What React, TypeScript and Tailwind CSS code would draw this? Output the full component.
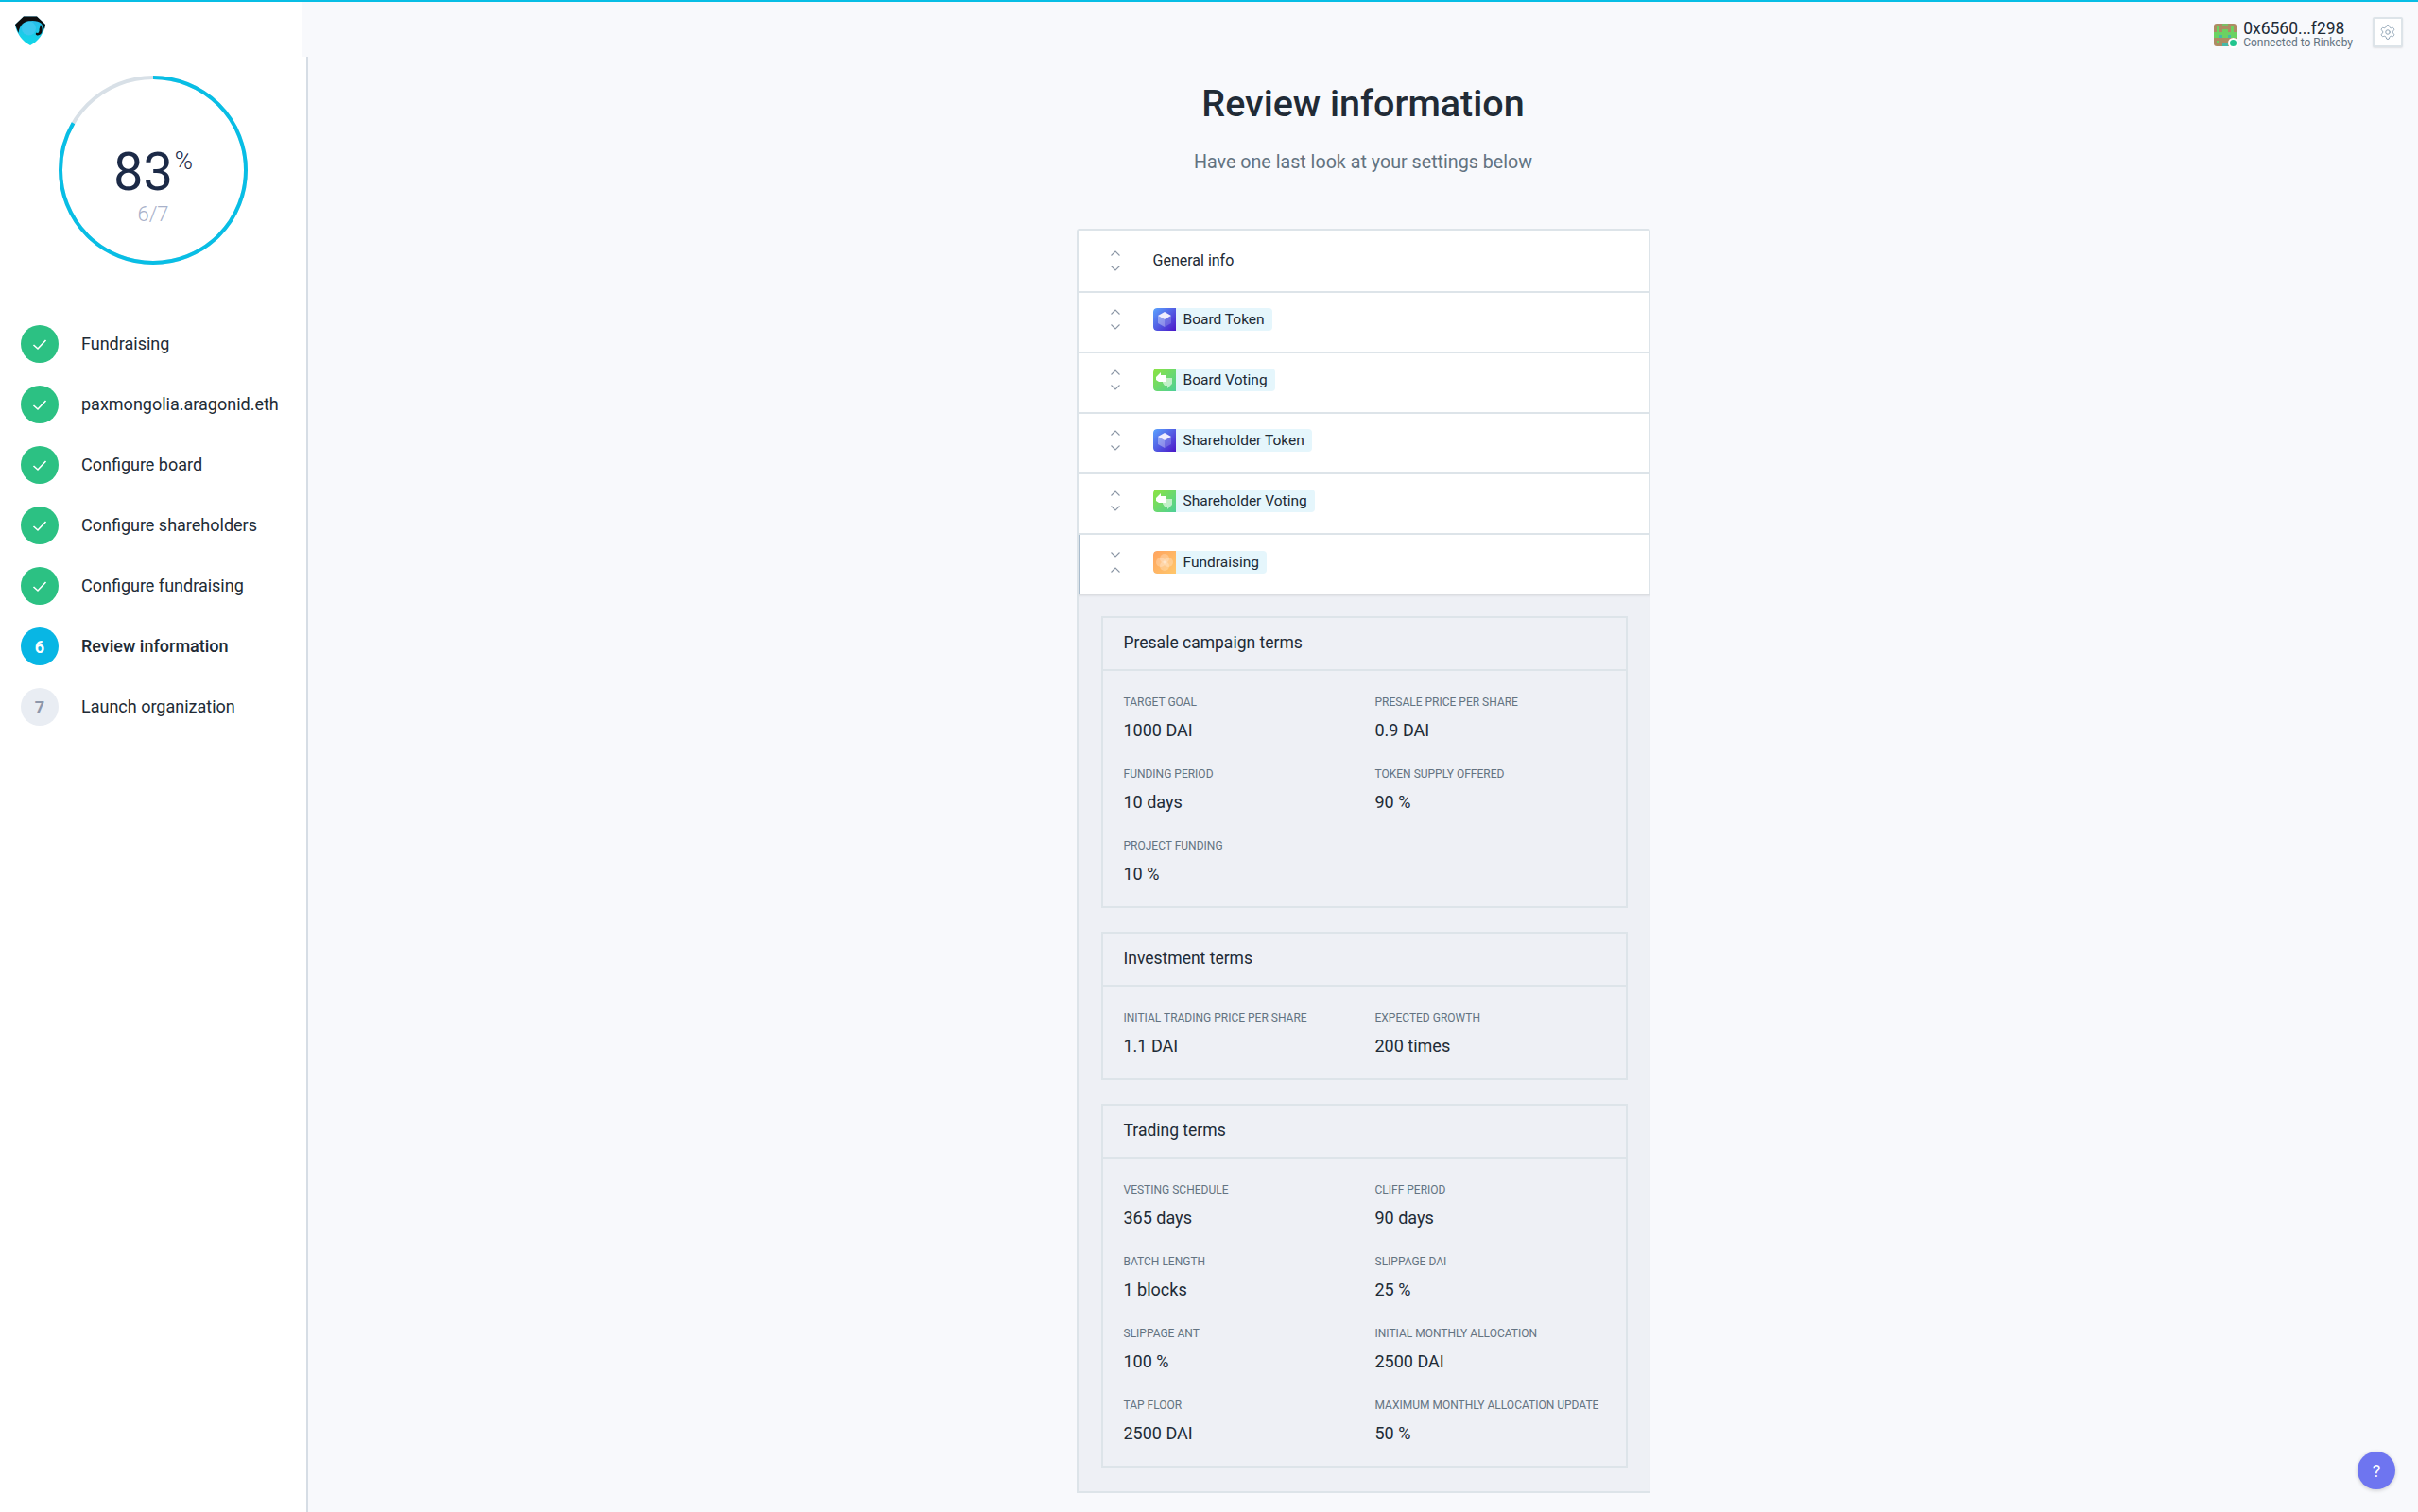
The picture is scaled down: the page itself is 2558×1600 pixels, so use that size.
import { Settings } from 'lucide-react';

const steps = [
  { label: 'Fundraising', state: 'done' },
  { label: 'paxmongolia.aragonid.eth', state: 'done' },
  { label: 'Configure board', state: 'done' },
  { label: 'Configure shareholders', state: 'done' },
  { label: 'Configure fundraising', state: 'done' },
  { label: 'Review information', state: 'active', num: '6' },
  { label: 'Launch organization', state: 'todo', num: '7' },
];

const rows = [
  { label: 'Board Token', icon: 'token' },
  { label: 'Board Voting', icon: 'voting' },
  { label: 'Shareholder Token', icon: 'token' },
  { label: 'Shareholder Voting', icon: 'voting' },
];

const sections = [
  {
    title: 'Presale campaign terms',
    items: [
      ['TARGET GOAL', '1000 DAI'],
      ['PRESALE PRICE PER SHARE', '0.9 DAI'],
      ['FUNDING PERIOD', '10 days'],
      ['TOKEN SUPPLY OFFERED', '90 %'],
      ['PROJECT FUNDING', '10 %'],
    ],
  },
  {
    title: 'Investment terms',
    items: [
      ['INITIAL TRADING PRICE PER SHARE', '1.1 DAI'],
      ['EXPECTED GROWTH', '200 times'],
    ],
  },
  {
    title: 'Trading terms',
    items: [
      ['VESTING SCHEDULE', '365 days'],
      ['CLIFF PERIOD', '90 days'],
      ['BATCH LENGTH', '1 blocks'],
      ['SLIPPAGE DAI', '25 %'],
      ['SLIPPAGE ANT', '100 %'],
      ['INITIAL MONTHLY ALLOCATION', '2500 DAI'],
      ['TAP FLOOR', '2500 DAI'],
      ['MAXIMUM MONTHLY ALLOCATION UPDATE', '50 %'],
    ],
  },
];

function Logo() {
  return (
    <svg width="32" height="31" viewBox="0 0 32 31">
      <defs>
        <linearGradient id="lg" x1="0" y1="0" x2="0" y2="1">
          <stop offset="0" stopColor="#2cb8ea" />
          <stop offset="1" stopColor="#0fd8e8" />
        </linearGradient>
      </defs>
      <path d="M9 0.5 H23 L32 9 C31 18 24 27 16 31 C8 27 1 18 0 9 Z" fill="url(#lg)" />
      <path d="M9 0.5 H23 L32 9 L31 14 L28 8 C24 4 13 4 8 8 C5 11 4 14 3.5 18 L0 9 Z" fill="#0e0e0e" />
      <circle cx="14.5" cy="13" r="7.5" fill="#3cc8ef" />
      <path d="M27 9 C30 14 29 20 24 20.5 C21.5 20.5 21 18 23 17.5 C24 19 26 17 25.5 14 Z" fill="#0e0e0e" />
    </svg>
  );
}

function Progress() {
  const r = 98;
  const c = 2 * Math.PI * r;
  return (
    <div className="relative w-[200px] h-[200px] ml-[62px]">
      <svg width="200" height="200" viewBox="0 0 200 200" className="-rotate-90">
        <circle cx="100" cy="100" r={r} fill="none" stroke="#d8e0e7" strokeWidth="4" />
        <circle
          cx="100"
          cy="100"
          r={r}
          fill="none"
          stroke="#08bee5"
          strokeWidth="4"
          strokeDasharray={`${c * 0.8333} ${c}`}
        />
      </svg>
      <div className="absolute inset-0 flex flex-col items-center pt-[72px]">
        <div className="flex items-start">
          <span className="text-[56px] leading-[60px] text-[#1c2a47]">83</span>
          <span className="text-[26px] leading-[36px] font-light text-[#1c2a47] ml-[2px]">%</span>
        </div>
        <span className="mt-[2px] text-[22px] leading-[26px] font-light text-[#a8b1ca]">6/7</span>
      </div>
    </div>
  );
}

function StepBadge({ state, num }: { state: string; num?: string }) {
  if (state === 'done') {
    return (
      <div className="w-10 h-10 rounded-full bg-[#2cc183] flex items-center justify-center shrink-0">
        <svg width="16" height="13" viewBox="0 0 16 13" fill="none">
          <path d="M1.5 7 L6 11 L14.5 2" stroke="#fff" strokeWidth="1.6" />
        </svg>
      </div>
    );
  }
  return (
    <div
      className={
        state === 'active'
          ? 'w-10 h-10 rounded-full bg-[#08b6e4] flex items-center justify-center shrink-0 text-white text-[18px] font-bold'
          : 'w-10 h-10 rounded-full bg-[#e9edf3] flex items-center justify-center shrink-0 text-[#8d97ab] text-[18px] font-bold'
      }
    >
      {num}
    </div>
  );
}

function Chevrons({ open }: { open?: boolean }) {
  const up = 'M0.5 5.5 L5 1 L9.5 5.5';
  const down = 'M0.5 0.5 L5 5 L9.5 0.5';
  return (
    <div className="w-[10px] flex flex-col gap-[10px] shrink-0">
      <svg width="10" height="6" viewBox="0 0 10 6" fill="none">
        <path d={open ? down : up} stroke="#8b96a5" strokeWidth="1.1" />
      </svg>
      <svg width="10" height="6" viewBox="0 0 10 6" fill="none">
        <path d={open ? up : down} stroke="#8b96a5" strokeWidth="1.1" />
      </svg>
    </div>
  );
}

function AppIcon({ icon }: { icon: string }) {
  if (icon === 'token') {
    return (
      <svg width="24" height="24" viewBox="0 0 24 24" className="shrink-0">
        <defs>
          <linearGradient id="tk" x1="0" y1="0" x2="1" y2="1">
            <stop offset="0" stopColor="#5ba4ff" />
            <stop offset="1" stopColor="#4a16c8" />
          </linearGradient>
        </defs>
        <path d="M4 0 H24 V24 H4 A4 4 0 0 1 0 20 V4 A4 4 0 0 1 4 0 Z" fill="url(#tk)" />
        <path d="M12 4 L19 8 L12 12 L5 8 Z" fill="#f1edfd" />
        <path d="M5 8 L12 12 V20 L5 16 Z" fill="#ffffff" fillOpacity="0.35" />
        <path d="M19 8 L12 12 V20 L19 16 Z" fill="#ffffff" fillOpacity="0.18" />
      </svg>
    );
  }
  if (icon === 'voting') {
    return (
      <svg width="24" height="24" viewBox="0 0 24 24" className="shrink-0">
        <defs>
          <linearGradient id="vt" x1="0" y1="0" x2="1" y2="1">
            <stop offset="0" stopColor="#8ee43f" />
            <stop offset="1" stopColor="#4dcf98" />
          </linearGradient>
        </defs>
        <path d="M4 0 H24 V24 H4 A4 4 0 0 1 0 20 V4 A4 4 0 0 1 4 0 Z" fill="url(#vt)" />
        <path d="M10 10 H20 V16 L15 21 V18 H12 L10 15 Z" fill="#ffffff" fillOpacity="0.6" />
        <path d="M3 9 L8 4 V7 H13 V14 H6 L3 12 Z" fill="#ffffff" />
      </svg>
    );
  }
  return (
    <svg width="24" height="24" viewBox="0 0 24 24" className="shrink-0">
      <defs>
        <linearGradient id="fr" x1="0" y1="0" x2="1" y2="1">
          <stop offset="0" stopColor="#ffa45f" />
          <stop offset="1" stopColor="#ffc76b" />
        </linearGradient>
      </defs>
      <path d="M4 0 H24 V24 H4 A4 4 0 0 1 0 20 V4 A4 4 0 0 1 4 0 Z" fill="url(#fr)" />
      <circle cx="12" cy="8" r="5" fill="#fff" fillOpacity="0.25" />
      <circle cx="12" cy="16" r="5" fill="#fff" fillOpacity="0.25" />
      <circle cx="8" cy="12" r="5" fill="#fff" fillOpacity="0.25" />
      <circle cx="16" cy="12" r="5" fill="#fff" fillOpacity="0.25" />
    </svg>
  );
}

function Identicon() {
  return (
    <div className="relative w-6 h-6 shrink-0">
      <svg width="24" height="24" viewBox="0 0 8 8" className="rounded-[3px]" shapeRendering="crispEdges">
        <rect width="8" height="8" fill="#ae8c63" />
        <rect x="1" y="1" width="1" height="4" fill="#6cd262" />
        <rect x="6" y="1" width="1" height="4" fill="#6cd262" />
        <rect x="3" y="0" width="2" height="1" fill="#79c067" />
        <rect x="3" y="2" width="2" height="3" fill="#6cd262" />
        <rect x="0" y="3" width="8" height="2" fill="#6cd262" />
        <rect x="2" y="4" width="1" height="1" fill="#45b9a8" />
        <rect x="5" y="4" width="1" height="1" fill="#45b9a8" />
        <rect x="1" y="6" width="1" height="1" fill="#6cd262" />
        <rect x="3" y="7" width="2" height="1" fill="#45b9a8" />
      </svg>
      <span className="absolute right-[-2px] bottom-[-2px] w-[11px] h-[11px] rounded-full bg-[#21c58e] border-2 border-white" />
    </div>
  );
}

function ListRow({ children, open }: { children: React.ReactNode; open?: boolean }) {
  return (
    <div
      className={
        open
          ? 'h-[63px] flex items-center pl-[32px] pb-[6px] bg-white border-l-2 border-[#a9bccd]'
          : 'h-[64px] flex items-center pl-[34px] pb-[6px] bg-white border-b-2 border-[#dde4e9]'
      }
    >
      <Chevrons open={open} />
      <div className="ml-[35px] flex items-center">{children}</div>
    </div>
  );
}

function AppBadge({ label, icon }: { label: string; icon: string }) {
  return (
    <div className="flex items-center h-6 rounded-[4px] bg-[#e5f6fc] overflow-hidden pr-2">
      <AppIcon icon={icon} />
      <span className="ml-2 text-[15.5px] leading-6 text-[#212b36]">{label}</span>
    </div>
  );
}

export default function App() {
  return (
    <div className="[font-family:Roboto,sans-serif] w-[2558px] h-[1600px] overflow-hidden bg-[#f8f9fc] relative flex flex-col">
      <div className="h-[2px] bg-[#08bee5] shrink-0" />
      <div className="flex flex-1 min-h-0">
        <aside className="w-[326px] shrink-0 flex flex-col">
          <div className="h-[58px] w-[320px] bg-white pl-[16px] pt-[15px] shrink-0">
            <Logo />
          </div>
          <div className="flex-1 bg-white border-r-2 border-[#d6dde5] pt-[20px]">
            <Progress />
            <div className="mt-[64px] pl-[22px] flex flex-col gap-[24px]">
              {steps.map((s) => (
                <div key={s.label} className="flex items-center gap-[24px] h-10">
                  <StepBadge state={s.state} num={s.num} />
                  <span className={s.state === 'active' ? 'text-[18px] text-[#212b36] font-medium pb-[1px]' : 'text-[18px] text-[#212b36] pb-[1px]'}>
                    {s.label}
                  </span>
                </div>
              ))}
            </div>
          </div>
        </aside>

        <main className="flex-1 min-w-0 flex flex-col">
          <div className="h-[58px] shrink-0 flex items-start justify-end pt-[16px] pr-[16px]">
            <div className="flex items-center gap-[7px] mr-[21px] mt-[3px]">
              <Identicon />
              <div className="flex flex-col">
                <span className="text-[17.5px] leading-[18px] text-[#212b36]">0x6560...f298</span>
                <span className="text-[12px] leading-[13px] text-[#637381]">Connected to Rinkeby</span>
              </div>
            </div>
            <div className="w-[32px] h-[32px] bg-white rounded-[2px] border-2 border-[#dde4e9] shadow-[0_1px_2px_rgba(0,0,0,0.1)] flex items-center justify-center">
              <Settings size={18} strokeWidth={1.3} color="#8fa4b5" />
            </div>
          </div>

          <div className="flex flex-col items-center">
            <h1 className="mt-[25px] text-[39.5px] leading-[50px] font-medium text-[#212b36]">Review information</h1>
            <p className="mt-[24px] text-[19.7px] leading-[26px] text-[#637381]">Have one last look at your settings below</p>

            <div className="mt-[57px] w-[607px]">
              <div className="border-2 border-b-0 border-[#dde4e9] rounded-t-[3px]">
                <div className="h-[66px] flex items-center pl-[34px] bg-white border-b-2 border-[#dde4e9]">
                  <Chevrons />
                  <span className="ml-[35px] text-[16px] text-[#212b36]">General info</span>
                </div>
                {rows.map((r) => (
                  <ListRow key={r.label}>
                    <AppBadge label={r.label} icon={r.icon} />
                  </ListRow>
                ))}
                <ListRow open>
                  <AppBadge label="Fundraising" icon="fundraising" />
                </ListRow>
              </div>
              <div className="bg-[#eef0f5] border-l-2 border-b-2 border-[#dde4e9] shadow-[inset_0_3px_3px_-2px_rgba(0,0,0,0.12)] px-[24px] pt-[23px] pb-[25px] flex flex-col gap-[25px]">
                {sections.map((sec) => (
                  <div key={sec.title} className="border-2 border-[#dde4e9]">
                    <div className="h-[56px] flex items-center px-[22px] pb-[2px] border-b-2 border-[#dde4e9] text-[17.5px] text-[#212b36]">
                      {sec.title}
                    </div>
                    <div className="px-[22px] pt-[25px] pb-[22px] grid grid-cols-[266px_1fr] gap-y-[26px]">
                      {sec.items.map(([k, v]) => (
                        <div key={k}>
                          <div className="text-[12px] leading-[16px] whitespace-nowrap text-[#637381]">{k}</div>
                          <div className="mt-[10px] text-[18px] leading-[24px] text-[#212b36]">{v}</div>
                        </div>
                      ))}
                    </div>
                  </div>
                ))}
              </div>
            </div>
          </div>
        </main>
      </div>
      <button className="absolute right-[24px] bottom-[24px] w-10 h-10 rounded-full bg-[#6e75f0] text-white text-[18px] flex items-center justify-center shadow-[0_1px_4px_rgba(0,0,0,0.2)]">
        ?
      </button>
    </div>
  );
}
